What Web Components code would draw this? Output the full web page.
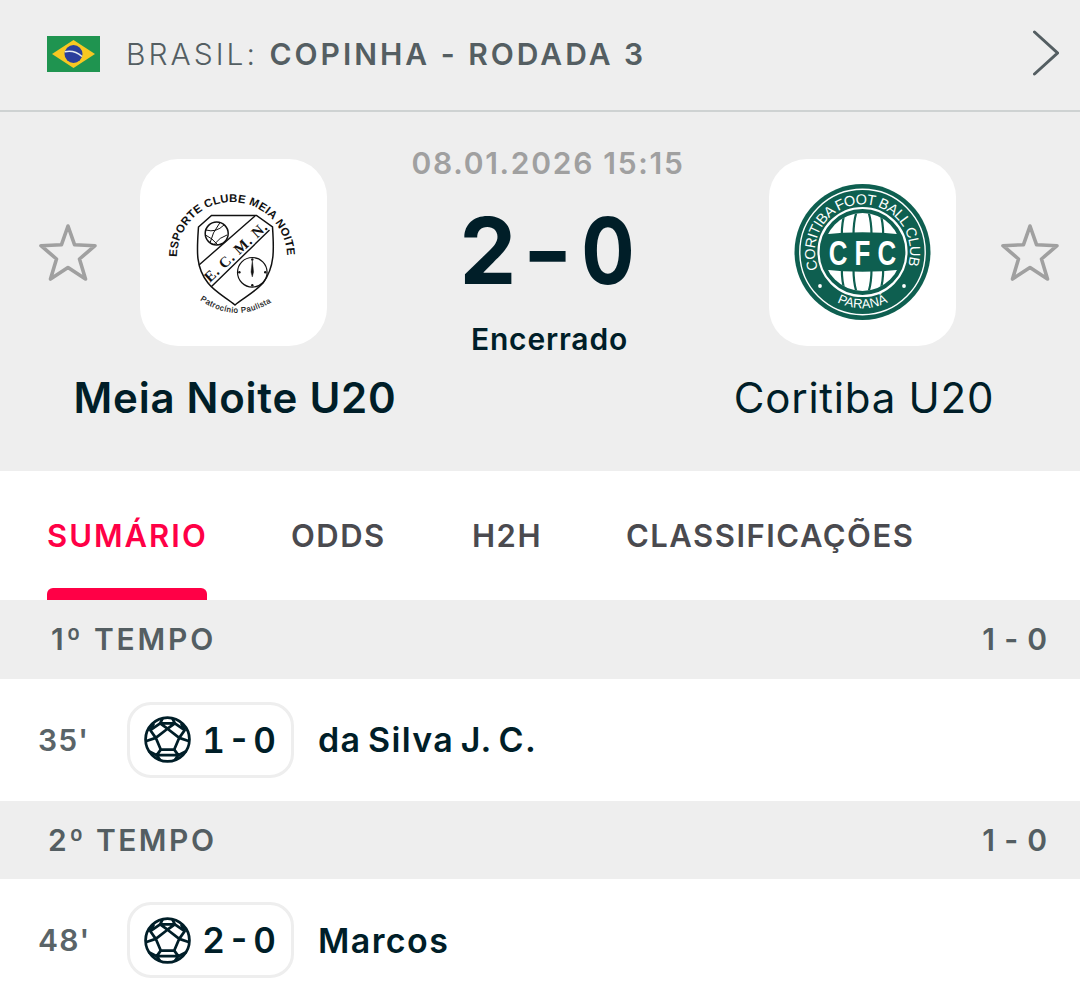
<!DOCTYPE html>
<html lang="pt">
<head>
<meta charset="utf-8">
<title>Meia Noite U20 x Coritiba U20</title>
<style>
  html, body { margin: 0; padding: 0; background: #fff; }
  body { font-family: Inter, "Liberation Sans", sans-serif; color: #001e28; width: 1080px; height: 996px; overflow: hidden; }
</style>
</head>
<body>
<league-bar country="BRASIL:" league="COPINHA - RODADA 3"></league-bar>
<match-hero>
  <team-side slot="home" name="Meia Noite U20" strong><meia-noite-logo></meia-noite-logo></team-side>
  <team-side slot="away" name="Coritiba U20"><coritiba-logo></coritiba-logo></team-side>
</match-hero>
<tab-bar>
  <tab-item active>SUMÁRIO</tab-item>
  <tab-item>ODDS</tab-item>
  <tab-item>H2H</tab-item>
  <tab-item>CLASSIFICAÇÕES</tab-item>
</tab-bar>
<period-row label="1º TEMPO" score="1 - 0" inset="51" spacing="2.85"></period-row>
<goal-row minute="35'" score="1 - 0" scorer="da Silva J. C."></goal-row>
<period-row label="2º TEMPO" score="1 - 0" inset="48" spacing="2.5"></period-row>
<goal-row minute="48'" score="2 - 0" scorer="Marcos"></goal-row>

<script>
class LeagueBar extends HTMLElement {
    constructor() {
        super();
        this.shadowDOM = this.attachShadow({mode: "open"});
    }

    connectedCallback() {
        this.shadowDOM.innerHTML = `
        <style>
          :host {
            display: flex;
            align-items: center;
            box-sizing: border-box;
            height: 112px;
            padding: 0 21px 2px 47px;
            background: #eeeeee;
            border-bottom: 2px solid #ced2d2;
            color: #545e62;
          }
          .flag { width: 53px; height: 36px; flex: none; display: block; }
          .title {
            flex: 1;
            margin-left: 26px;
            font-size: 30px;
            letter-spacing: 3px;
            font-weight: 300;
            white-space: nowrap;
          }
          b { font-weight: 600; }
          .chevron { width: 26px; height: 48px; display: block; }
        </style>
        <svg class="flag" viewBox="0 0 53 36">
          <rect width="53" height="36" fill="#1f9450"/>
          <path d="M26.5 4 L48 18 L26.5 32 L5 18 Z" fill="#f8c822"/>
          <circle cx="26.5" cy="18" r="9" fill="#2b3f9c"/>
          <path d="M17.8 15.8 Q27 13.5 35 20.5" fill="none" stroke="#e8eef0" stroke-width="1.6"/>
        </svg>
        <div class="title">${this.getAttribute("country")} <b>${this.getAttribute("league")}</b></div>
        <svg class="chevron" viewBox="0 0 26 48">
          <path d="M1.5 2 L24.5 23 L1.5 44" fill="none" stroke="#545e62" stroke-width="3" stroke-linecap="round"/>
        </svg>`;
    }
}

class MatchHero extends HTMLElement {
    constructor() {
        super();
        this.shadowDOM = this.attachShadow({mode: "open"});
        this.shadowDOM.innerHTML = `
        <style>
          :host {
            display: grid;
            grid-template-columns: 340px 290px 338px;
            box-sizing: border-box;
            height: 359px;
            padding: 0 49px 0 63px;
            background: #eeeeee;
          }
          .center {
            display: flex;
            flex-direction: column;
            align-items: center;
            padding-top: 33px;
          }
          .date {
            font-size: 30px;
            line-height: 36px;
            font-weight: 600;
            letter-spacing: 1.7px;
            color: #a0a0a0;
          }
          .score {
            display: grid;
            grid-template-columns: repeat(3, 60px);
            justify-items: center;
            margin-top: 24px;
            font-size: 92px;
            line-height: 92px;
            font-weight: 700;
            color: #001e28;
          }
          .score span { display: block; }
          .score .home { transform: scaleX(.98); }
          .score .dash { transform: scaleX(1.18); }
          .score .away { transform: scaleX(.86); }
          .status {
            margin-top: 24px;
            padding-left: 3px;
            font-size: 30px;
            line-height: 36px;
            font-weight: 600;
            letter-spacing: .8px;
            color: #001e28;
          }
        </style>
        <slot name="home"></slot>
        <div class="center">
          <div class="date">08.01.2026 15:15</div>
          <div class="score"><span class="home">2</span><span class="dash">-</span><span class="away">0</span></div>
          <div class="status">Encerrado</div>
        </div>
        <slot name="away"></slot>`;
    }
}

class TeamSide extends HTMLElement {
    constructor() {
        super();
        this.shadowDOM = this.attachShadow({mode: "open"});
    }

    connectedCallback() {
        let away = this.slot === "away";
        this.shadowDOM.innerHTML = `
        <style>
          :host {
            position: relative;
            display: flex;
            flex-direction: column;
            align-items: center;
            padding-top: 47px;
          }
          .logo {
            width: 187px;
            height: 187px;
            border-radius: 38px;
            background: #fff;
          }
          .name {
            margin-top: 28px;
            padding-left: 4px;
            font-size: 42px;
            line-height: 48px;
            letter-spacing: .75px;
            white-space: nowrap;
            font-weight: ${this.hasAttribute("strong") ? 600 : 400};
            color: #001e28;
          }
          .star {
            position: absolute;
            top: 110px;
            ${away ? "right: -29px" : "left: -25px"};
            width: 60px;
            height: 60px;
          }
        </style>
        <div class="logo"><slot></slot></div>
        <div class="name">${this.getAttribute("name")}</div>
        <svg class="star" viewBox="0 0 60 60">
          <path d="M30 4 L36.5 22.7 L57 23.7 L41.5 37 L47.5 57 L30 45.5 L12.5 57 L18.5 37 L3 23.7 L23.5 22.7 Z"
                fill="none" stroke="#a0a0a0" stroke-width="3.6" stroke-linejoin="round"/>
        </svg>`;
    }
}

class MeiaNoiteLogo extends HTMLElement {
    constructor() {
        super();
        this.shadowDOM = this.attachShadow({mode: "open"});
        this.shadowDOM.innerHTML = `
        <style>
          :host { display: block; width: 187px; height: 187px; }
          svg { display: block; font-family: "Liberation Sans", sans-serif; }
        </style>
        <svg viewBox="0 0 187 187" width="187" height="187">
          <defs>
            <path id="arc" d="M37 98 A55 55 0 0 1 147 98"/>
            <path id="low" d="M60 141 Q96 166 133 142"/>
          </defs>
          <text font-size="11.4" font-weight="700" fill="#111"><textPath href="#arc" textLength="171" lengthAdjust="spacing">ESPORTE CLUBE MEIA NOITE</textPath></text>
          <path d="M58.5 68 L71.5 56.5 L116.5 56.5 L132.5 68 C134 90 135 108 123 124 C114 134 103 139 95 146 C87 139 76 134 68 124 C55 108 57 90 58.5 68 Z"
                fill="#fff" stroke="#111" stroke-width="1.5"/>
          <path d="M115 57 L59 106 M129.5 71 L71.5 127.5" stroke="#111" stroke-width="1.4" fill="none"/>
          <g fill="none" stroke="#111">
            <circle cx="76.7" cy="74.5" r="11.5" stroke-width="1.5"/>
            <path d="M66 71 Q76 74 84 66 M70 84 Q72 74 80 63.5 M74 85.5 Q80 78 87 76 M65.5 76 Q72 79 78 86" stroke-width="1"/>
            <circle cx="112.3" cy="113.3" r="14.8" stroke-width="1.2"/>
            <path d="M112.3 101 L113.6 113 L112.3 118 L111 113 Z" fill="#111" stroke-width=".4"/>
          </g>
          <g fill="#111">
            <circle cx="112.3" cy="100.4" r="1.2"/><circle cx="112.3" cy="126.2" r="1.2"/>
            <circle cx="99.4" cy="113.3" r="1.2"/><circle cx="125.2" cy="113.3" r="1.2"/>
          </g>
          <text x="95.5" y="98" font-family="Liberation Serif, serif" font-size="15" font-weight="700" fill="#111" text-anchor="middle"
                transform="rotate(-43 95.5 93)" textLength="80">E. C. M. N.</text>
          <text font-size="7.8" fill="#111" stroke="#111" stroke-width=".2"><textPath href="#low" textLength="76">Patrocínio Paulista</textPath></text>
        </svg>`;
    }
}

class CoritibaLogo extends HTMLElement {
    constructor() {
        super();
        this.shadowDOM = this.attachShadow({mode: "open"});
        let ribs = "";
        for (const [top, bottom] of [[-17, -20.7], [-5.7, -9], [5.7, 9], [17, 20.7]]) {
            ribs += `<path d="M${93.5 + top} 52 Q${93.5 + bottom} 62 ${93.5 + bottom} 76" stroke="#0e5f50" stroke-width="2.2" fill="none"/>`;
            ribs += `<path d="M${93.5 + top} 134 Q${93.5 + bottom} 124 ${93.5 + bottom} 110" stroke="#0e5f50" stroke-width="2.2" fill="none"/>`;
        }
        this.shadowDOM.innerHTML = `
        <style>
          :host { display: block; width: 187px; height: 187px; }
          svg { display: block; font-family: "Liberation Sans", sans-serif; }
        </style>
        <svg viewBox="0 0 187 187" width="187" height="187">
          <defs>
            <path id="top" d="M49.2 110 A47.5 47.5 0 1 1 137.8 110"/>
            <path id="bot" d="M64.3 141 A56 56 0 0 0 122.7 141"/>
            <clipPath id="globe"><circle cx="93.5" cy="93" r="39"/></clipPath>
          </defs>
          <circle cx="93.5" cy="93" r="68" fill="#0e5f50"/>
          <circle cx="93.5" cy="93" r="62.7" fill="none" stroke="#fff" stroke-width="1.4"/>
          <circle cx="93.5" cy="93" r="44" fill="none" stroke="#fff" stroke-width="2.2"/>
          <text font-size="14.5" fill="#fff"><textPath href="#top" textLength="180" lengthAdjust="spacing">CORITIBA FOOT BALL CLUB</textPath></text>
          <text font-size="13" fill="#fff" text-anchor="middle"><textPath href="#bot" startOffset="50%">PARANÁ</textPath></text>
          <circle cx="51" cy="127" r="1.9" fill="#fff"/><circle cx="135" cy="127" r="1.9" fill="#fff"/>
          <g clip-path="url(#globe)">
            <path d="M54 75.5 Q93.5 71 133 75.5 L133 50 L54 50 Z" fill="#fff"/>
            <path d="M54 110.5 Q93.5 115 133 110.5 L133 136 L54 136 Z" fill="#fff"/>
            ${ribs}
          </g>
          <text transform="translate(93.5 105.5) scale(.72 1)" font-size="36" font-weight="700" fill="#fff" text-anchor="middle" textLength="94" lengthAdjust="spacing">CFC</text>
        </svg>`;
    }
}

class TabBar extends HTMLElement {
    constructor() {
        super();
        this.shadowDOM = this.attachShadow({mode: "open"});
        this.shadowDOM.innerHTML = `
        <style>
          :host {
            display: grid;
            grid-template-columns: 244px 181px 154px auto;
            justify-items: start;
            box-sizing: border-box;
            height: 129px;
            padding-left: 47px;
            background: #fff;
          }
        </style>
        <slot></slot>`;
    }
}

class TabItem extends HTMLElement {
    constructor() {
        super();
        this.shadowDOM = this.attachShadow({mode: "open"});
    }

    connectedCallback() {
        let active = this.hasAttribute("active");
        this.shadowDOM.innerHTML = `
        <style>
          :host {
            display: flex;
            flex-direction: column;
            justify-content: space-between;
          }
          .label {
            margin-top: 47px;
            font-size: 31px;
            line-height: 36px;
            font-weight: 600;
            letter-spacing: ${active ? 2 : 1.5}px;
            white-space: nowrap;
            color: ${active ? "#ff0046" : "#4a4a4f"};
          }
          .line {
            width: 160px;
            height: 12px;
            border-radius: 6px 6px 0 0;
            background: ${active ? "#ff0046" : "transparent"};
          }
        </style>
        <div class="label"><slot></slot></div>
        <div class="line"></div>`;
    }
}

class PeriodRow extends HTMLElement {
    constructor() {
        super();
        this.shadowDOM = this.attachShadow({mode: "open"});
    }

    connectedCallback() {
        this.shadowDOM.innerHTML = `
        <style>
          :host {
            display: flex;
            align-items: center;
            justify-content: space-between;
            box-sizing: border-box;
            height: 78.5px;
            padding: 0 30px 0 ${this.getAttribute("inset")}px;
            background: #eeeeee;
            color: #545e62;
            font-size: 30px;
            font-weight: 600;
          }
          .label { letter-spacing: ${this.getAttribute("spacing")}px; }
          .score { letter-spacing: 2.85px; word-spacing: -4px; }
        </style>
        <span class="label">${this.getAttribute("label")}</span>
        <span class="score">${this.getAttribute("score")}</span>`;
    }
}

class SoccerBall extends HTMLElement {
    constructor() {
        super();
        this.shadowDOM = this.attachShadow({mode: "open"});
        this.shadowDOM.innerHTML = `
        <style>
          :host { display: block; width: 47px; height: 47px; flex: none; }
          svg { display: block; }
        </style>
        <svg viewBox="0 0 48 48" width="47" height="47" fill="none" stroke="#001e28" stroke-width="2.8" stroke-linejoin="round">
          <circle cx="24" cy="24" r="22.4"/>
          <path d="M24 13 L36 22.3 L30.9 34.3 L17.1 34.3 L12 22.3 Z"/>
          <path d="M24 13 L16.5 7.5 L19 2.5 M24 13 L31.5 7.5 L29 2.5 M16.5 7.5 H31.5"/>
          <path d="M36 22.3 L41.5 14.5 L38 7.5 M36 22.3 L45.5 25.5 M41.5 14.5 L31.5 7.5"/>
          <path d="M12 22.3 L6.5 14.5 L10 7.5 M12 22.3 L2.5 25.5 M6.5 14.5 L16.5 7.5"/>
          <path d="M30.9 34.3 L35 40 L31.5 45 M35 40 L43 36 M17.1 34.3 L13 40 L16.5 45 M13 40 L5 36 M13 40 H35"/>
        </svg>`;
    }
}

class GoalRow extends HTMLElement {
    constructor() {
        super();
        this.shadowDOM = this.attachShadow({mode: "open"});
    }

    connectedCallback() {
        this.shadowDOM.innerHTML = `
        <style>
          :host {
            display: flex;
            align-items: center;
            box-sizing: border-box;
            height: 122px;
            padding-left: 38px;
            background: #fff;
          }
          .minute {
            width: 89px;
            font-size: 30px;
            font-weight: 600;
            letter-spacing: 1.2px;
            color: #5a6468;
          }
          .pill {
            display: flex;
            align-items: center;
            justify-content: space-between;
            box-sizing: border-box;
            width: 167px;
            height: 76px;
            padding: 0 15px 0 14px;
            border: 3px solid #eeeeee;
            border-radius: 24px;
          }
          .pill span {
            font-size: 35px;
            font-weight: 600;
            font-feature-settings: "tnum";
            word-spacing: -6.5px;
            white-space: nowrap;
            color: #001e28;
          }
          .scorer {
            margin-left: 24px;
            font-size: 34px;
            font-weight: 600;
            letter-spacing: 1.4px;
            word-spacing: -3.6px;
            white-space: nowrap;
            color: #001e28;
          }
        </style>
        <div class="minute">${this.getAttribute("minute")}</div>
        <div class="pill"><soccer-ball></soccer-ball><span>${this.getAttribute("score")}</span></div>
        <div class="scorer">${this.getAttribute("scorer")}</div>`;
    }
}

customElements.define("league-bar", LeagueBar);
customElements.define("match-hero", MatchHero);
customElements.define("team-side", TeamSide);
customElements.define("meia-noite-logo", MeiaNoiteLogo);
customElements.define("coritiba-logo", CoritibaLogo);
customElements.define("tab-bar", TabBar);
customElements.define("tab-item", TabItem);
customElements.define("period-row", PeriodRow);
customElements.define("soccer-ball", SoccerBall);
customElements.define("goal-row", GoalRow);
</script>
</body>
</html>
